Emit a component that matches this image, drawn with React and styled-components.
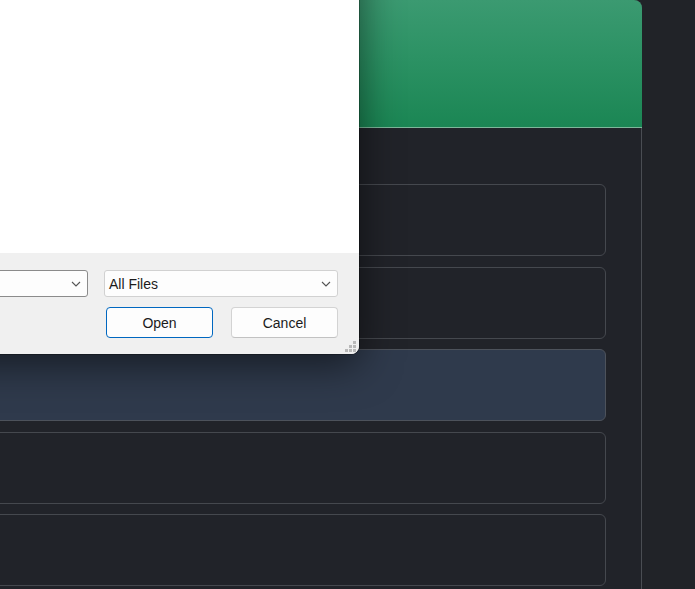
import styled, { createGlobalStyle } from "styled-components";

const GlobalStyle = createGlobalStyle`
  html, body {
    margin: 0;
    padding: 0;
    background: #212328;
    overflow: hidden;
  }
`;

const Page = styled.div`
  position: relative;
  display: flex;
  width: 695px;
  height: 589px;
  overflow: hidden;
  background: #212328;
`;

const Panel = styled.section`
  margin-left: -40px;
  width: 682px;
  height: 640px;
  display: flex;
  flex-direction: column;
  background: #212329;
  border: 1px solid #4a4d53;
  border-top: none;
  border-radius: 8px 8px 0 0;
  box-sizing: border-box;
  flex-shrink: 0;
`;

const Header = styled.header`
  height: 128px;
  box-sizing: border-box;
  background: linear-gradient(180deg, #3b9a71 0%, #2c9264 45%, #1b8654 100%);
  border-bottom: 1px solid #7db89b;
  border-radius: 8px 8px 0 0;
  margin: 0 -1px;
`;

const CardList = styled.div`
  display: flex;
  flex-direction: column;
  gap: 10.5px;
  padding: 56px 35px 0 0;
`;

const Card = styled.div`
  height: 72px;
  box-sizing: border-box;
  border: 1px solid ${(p) => (p.$active ? "#4d525b" : "#45484e")};
  border-radius: 6px;
  background: ${(p) => (p.$active ? "#2f3a4c" : "transparent")};
`;

const Dialog = styled.div`
  position: absolute;
  left: -300px;
  top: -100px;
  width: 659px;
  height: 454px;
  display: flex;
  flex-direction: column;
  border-radius: 8px;
  overflow: hidden;
  background: #ffffff;
  box-shadow: 0 10px 40px rgba(0, 0, 0, 0.55), 0 0 0 1px rgba(0, 0, 0, 0.25);
  font-family: "Liberation Sans", Arial, sans-serif;
`;

const Content = styled.div`
  flex: 1;
  background: #ffffff;
`;

const Footer = styled.div`
  position: relative;
  height: 101px;
  box-sizing: border-box;
  background: #f0f0f0;
  display: flex;
  flex-direction: column;
  align-items: flex-end;
  gap: 10px;
  padding: 17px 21px 0 0;
`;

const Row = styled.div`
  display: flex;
  gap: ${(p) => p.$gap}px;
`;

const Select = styled.div`
  width: ${(p) => p.$width}px;
  height: 27px;
  box-sizing: border-box;
  display: flex;
  align-items: center;
  justify-content: space-between;
  padding: 1px 6px 0 4px;
  background: #fdfdfd;
  border: 1px solid ${(p) => (p.$dark ? "#8b8b8b" : "#d1d1d1")};
  border-radius: 3px;
  font-size: 14px;
  color: #1b1b1b;
`;

const Button = styled.button`
  width: 107px;
  height: 31px;
  box-sizing: border-box;
  background: #fdfdfd;
  border: 1px solid ${(p) => (p.$primary ? "#0067c0" : "#d3d3d3")};
  border-bottom-color: ${(p) => (p.$primary ? "#0067c0" : "#c2c2c2")};
  border-radius: 4px;
  font-family: inherit;
  font-size: 14px;
  color: #1b1b1b;
  padding: 0;
`;

const Grip = styled.svg`
  position: absolute;
  right: 2px;
  bottom: 1px;
`;

const Chevron = () => (
  <svg width="10" height="6" viewBox="0 0 10 6">
    <path d="M1 1l4 4 4-4" fill="none" stroke="#555" strokeWidth="1.1" />
  </svg>
);

export default function App() {
  return (
    <Page>
      <GlobalStyle />
      <Panel>
        <Header />
        <CardList>
          <Card />
          <Card />
          <Card $active />
          <Card />
          <Card />
        </CardList>
      </Panel>
      <Dialog>
        <Content />
        <Footer>
          <Row $gap={16}>
            <Select $width={300} $dark>
              <span />
              <Chevron />
            </Select>
            <Select $width={234}>
              <span>All Files</span>
              <Chevron />
            </Select>
          </Row>
          <Row $gap={18}>
            <Button $primary>Open</Button>
            <Button>Cancel</Button>
          </Row>
          <Grip width="12" height="12" viewBox="0 0 12 12">
            <g fill="#b9b9b9">
              <rect x="8" y="0" width="3" height="3" />
              <rect x="4" y="4" width="3" height="3" />
              <rect x="8" y="4" width="3" height="3" />
              <rect x="0" y="8" width="3" height="3" />
              <rect x="4" y="8" width="3" height="3" />
              <rect x="8" y="8" width="3" height="3" />
            </g>
          </Grip>
        </Footer>
      </Dialog>
    </Page>
  );
}
